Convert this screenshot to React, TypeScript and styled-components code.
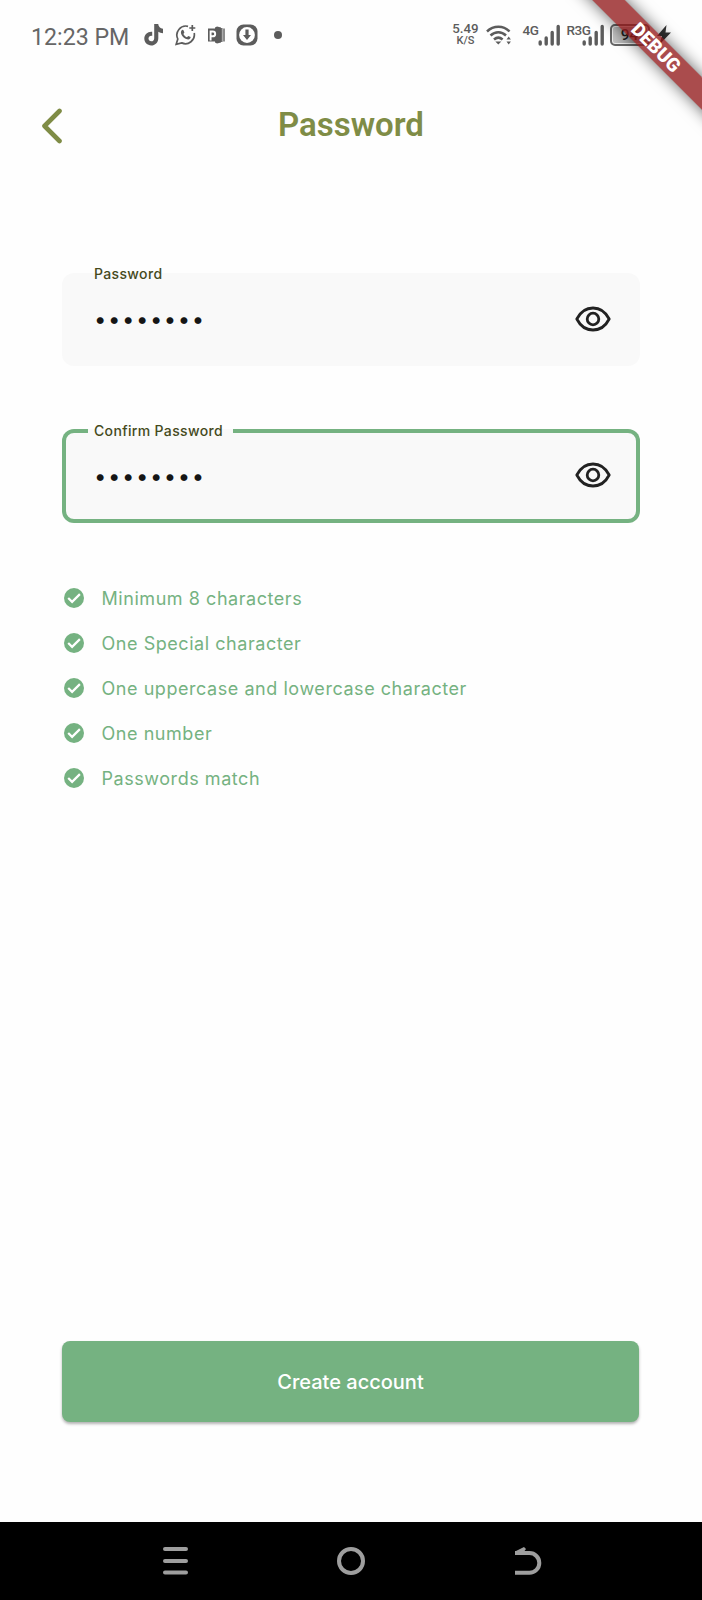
import React from 'react';
import styled, { createGlobalStyle } from 'styled-components';

const GlobalStyle = createGlobalStyle`
  * { box-sizing: border-box; }
  body { margin: 0; background: #fff; }
`;

const ink = '#5c5c5c';
const green = '#75b281';

const Screen = styled.div`
  position: relative;
  display: flex;
  flex-direction: column;
  width: 702px;
  height: 1600px;
  overflow: hidden;
  background: #fefefe;
  font-family: Inter, 'Liberation Sans', sans-serif;
`;

const StatusBar = styled.header`
  display: flex;
  justify-content: space-between;
  height: 72px;
  padding: 0 31.5px 0 31px;
  color: ${ink};
  font-family: Roboto, 'Liberation Sans', sans-serif;
`;

const StatusGroup = styled.div`
  display: flex;
  align-items: center;
  height: 70px;
`;

const Clock = styled.span`
  width: 111px;
  color: #666;
  font-size: 23.2px;
  font-weight: 400;
  line-height: 28px;
  white-space: nowrap;
  padding-top: 3px;
`;

const Speed = styled.div`
  display: flex;
  flex-direction: column;
  align-items: center;
  width: 26px;
  font-size: 13.3px;
  font-weight: 500;
  line-height: 12px;
  white-space: nowrap;
`;

const SpeedUnit = styled.span`
  font-size: 11px;
`;

const Signal = styled.div<{ $width: number; $gap: number }>`
  display: flex;
  align-items: flex-end;
  width: ${(p) => p.$width}px;
  height: 22px;
  margin-left: ${(p) => p.$gap}px;
`;

const SignalName = styled.span<{ $width: number }>`
  align-self: flex-start;
  width: ${(p) => p.$width}px;
  font-size: 13.5px;
  font-weight: 500;
  line-height: 13px;
  letter-spacing: -0.5px;
  white-space: nowrap;
`;

const Battery = styled.div`
  display: flex;
  align-items: center;
  justify-content: center;
  width: 40px;
  height: 22px;
  margin-left: 6px;
  border: 2px solid #666;
  border-radius: 5px;
  background: linear-gradient(90deg, #c4c4c4, #999);
  box-shadow: inset 0 0 0 1px #eee;
  color: #222;
  font-size: 15.5px;
  font-weight: 500;
`;

const Glyph = styled.svg<{ $gap?: number }>`
  display: block;
  flex: none;
  margin-left: ${(p) => p.$gap ?? 0}px;
`;

const Ribbon = styled.div`
  position: absolute;
  top: 35.5px;
  left: 555.5px;
  width: 200px;
  height: 23px;
  transform: rotate(45deg);
  background: rgba(145, 22, 24, 0.77);
  box-shadow: 0 0 16px rgba(0, 0, 0, 0.6);
  color: #fff;
  font: 900 19px/24px Roboto, 'Liberation Sans', sans-serif;
  text-align: center;
`;

const TitleBar = styled.div`
  display: grid;
  grid-template-columns: 60px 1fr 60px;
  align-items: center;
  height: 108px;
  padding: 0 8px;
`;

const BackButton = styled.button`
  display: flex;
  width: 60px;
  padding: 0 0 0 32px;
  border: 0;
  background: none;
`;

const Title = styled.h1`
  margin: -2px 0 0;
  color: #7f8c46;
  font: 600 33px/40px Roboto, 'Liberation Sans', sans-serif;
  text-align: center;
`;

const Form = styled.main`
  display: flex;
  flex: 1;
  flex-direction: column;
  padding: 93px 62px 100px;
`;

const Field = styled.div<{ $focused?: boolean }>`
  position: relative;
  display: flex;
  align-items: center;
  justify-content: space-between;
  height: ${(p) => (p.$focused ? 94 : 93)}px;
  margin: 0 0 ${(p) => (p.$focused ? 62 : 63)}px;
  padding: 0 29.5px 2px 32px;
  border-radius: 12px;
  background: #f9f9f9;
  box-shadow: ${(p) => (p.$focused ? `inset 0 0 0 4px ${green}` : 'none')};
`;

const FieldLabel = styled.label<{ $focused?: boolean }>`
  position: absolute;
  top: ${(p) => (p.$focused ? -8 : -9)}px;
  left: 26px;
  padding: 0 10px 0 6px;
  background: ${(p) => (p.$focused ? 'linear-gradient(#fefefe 8px, #f9f9f9 8px)' : 'none')};
  color: #454a1c;
  font-size: 14px;
  font-weight: 500;
  line-height: 20px;
  letter-spacing: 0.35px;
  white-space: nowrap;
`;

const Dots = styled.span`
  padding-top: 1px;
  color: #151515;
  font-size: 22px;
  line-height: 24px;
  letter-spacing: 1.6px;
`;

const Rules = styled.ul`
  display: flex;
  flex-direction: column;
  margin: -9px 0 0;
  padding: 0;
  list-style: none;
`;

const Rule = styled.li`
  display: flex;
  align-items: center;
  gap: 17.5px;
  height: 44.9px;
  padding-left: 2px;
  color: ${green};
  font-size: 18px;
  font-weight: 400;
  letter-spacing: 0.55px;
`;

const CreateButton = styled.button`
  width: 577px;
  height: 81px;
  margin: auto 0 0;
  border: 0;
  border-radius: 8px;
  background: ${green};
  box-shadow: 0 2px 3px rgba(0, 0, 0, 0.3);
  color: #fff;
  font: 500 20px/24px Inter, 'Liberation Sans', sans-serif;
`;

const NavBar = styled.nav`
  display: flex;
  align-items: center;
  justify-content: space-between;
  height: 78px;
  padding: 0 160px;
  background: #000;
`;

const Eye = () => (
  <Glyph width="36" height="26" viewBox="0 0 36 26" fill="none" stroke="#222" strokeWidth="2.8">
    <path d="M1.8 13C5.5 5.8 11.5 2 18 2s12.500 3.800 16.200 11C30.500 20.200 24.500 24 18 24S5.500 20.200 1.800 13Z" strokeLinejoin="round" />
    <circle cx="18" cy="13" r="5.800" />
  </Glyph>
);

const Bars = () => (
  <Glyph width="22" height="22" viewBox="0 0 22 22" stroke={ink} strokeWidth="3.400" strokeLinecap="round">
    <path d="M2.200 18v2M8.200 14v6M14.200 8.500V20M20.200 2.500V20" />
  </Glyph>
);

const Check = () => (
  <Glyph width="20" height="20" viewBox="0 0 20 20">
    <circle cx="10" cy="10" r="10" fill={green} />
    <path d="m4.200 10 3.900 3.900 7.800-7.800" fill="none" stroke="#fff" strokeWidth="2.200" />
  </Glyph>
);

const rules = [
  'Minimum 8 characters',
  'One Special character',
  'One uppercase and lowercase character',
  'One number',
  'Passwords match',
];

export default function App() {
  return (
    <Screen>
      <GlobalStyle />
      <StatusBar>
        <StatusGroup>
          <Clock>12:23 PM</Clock>
          <Glyph $gap={1.5} width="20" height="22" viewBox="0 0 20 22" fill={ink}>
            <path d="M10.200 0h4c.3 2.600 2 4.500 4.800 4.800v4.400c-1.800 0-3.400-.5-4.700-1.400v6.400C14.300 18.500 11 21.500 7.200 21.500S.3 18.500.3 14.600c0-4.200 3.600-7.300 7.900-6.800v4.100c-2-.5-3.700.8-3.700 2.700 0 1.600 1.200 2.700 2.800 2.700 1.800 0 2.900-1.200 2.900-3.100V0Z" />
          </Glyph>
          <Glyph $gap={11} width="22" height="22" viewBox="0 0 22 22" fill="none" stroke={ink} strokeWidth="1.700">
            <path d="M13 2.300A9 9 0 0 0 2.800 15L1.200 20.300l5.500-1.400A9 9 0 0 0 19.200 9" />
            <path d="M17.300 1v6M14.300 4h6" />
            <path d="M6.500 6.500c.8-1 1.800-.8 2.200.3l.7 1.700-1 1.500c.8 1.600 2 2.600 3.500 3.200l1.400-1.300 2.400 1.200c-.2 2.500-2.400 2.800-4.500 1.900-2.800-1.200-6.800-5.100-4.700-8.500Z" fill={ink} stroke="none" />
          </Glyph>
          <Glyph $gap={10} width="18" height="18" viewBox="0 0 18 18">
            <path d="M8 1.500 10 .500 14 1.500v15l-4 1-2-1Z" fill={ink} />
            <path d="M14.800 2v14M17 2.500v13" stroke={ink} strokeWidth="1.400" />
            <path d="M1 2.500h9v13H1Z" fill={ink} />
            <path d="M3.600 14.500V5.500h2.200a2.400 2.400 0 0 1 0 4.800H3.600" fill="none" stroke="#fff" strokeWidth="1.900" />
          </Glyph>
          <Glyph $gap={11} width="22" height="22" viewBox="0 0 22 22">
            <rect x="0.500" y="0.500" width="21" height="21" rx="7" fill={ink} />
            <circle cx="11" cy="11" r="7.900" fill="#fff" />
            <path d="M9.400 5.500h3.200V11H15l-4 5-4-5h2.400Z" fill={ink} />
          </Glyph>
          <Glyph $gap={16} width="8" height="8" viewBox="0 0 8 8">
            <circle cx="4" cy="4" r="4" fill={ink} />
          </Glyph>
        </StatusGroup>
        <StatusGroup>
          <Speed>
            5.49
            <SpeedUnit>K/S</SpeedUnit>
          </Speed>
          <Glyph $gap={7} width="26" height="20" viewBox="0 0 26 20" fill="none" stroke={ink} strokeWidth="2.500">
            <path d="M1 6.500C7.500.2 17.500.2 23.500 6.500M4.500 10.500c4.700-4.300 11-4.300 15.500 0M8 14.500c2.600-2.300 6-2.300 8.600 0" />
            <path d="m9.300 16.500 3 3 3-3Z" fill={ink} stroke="none" />
            <path d="M20.500 14.500l2.200-3 2.200 3ZM20.500 16.500l2.200 3 2.200-3Z" fill={ink} stroke="none" />
          </Glyph>
          <Signal $gap={11} $width={37}>
            <SignalName $width={15}>4G</SignalName>
            <Bars />
          </Signal>
          <Signal $gap={7} $width={37}>
            <SignalName $width={15}>R3G</SignalName>
            <Bars />
          </Signal>
          <Battery>94</Battery>
          <Glyph $gap={7} width="14" height="20" viewBox="0 0 14 20" fill="#333">
            <path d="M9.500 0 0 11h5L2 20 14 7.500H8.500Z" />
          </Glyph>
        </StatusGroup>
      </StatusBar>
      <TitleBar>
        <BackButton aria-label="Back">
          <Glyph width="24" height="36" viewBox="0 0 24 36" fill="none" stroke="#7f8c46" strokeWidth="4.600" strokeLinecap="round" strokeLinejoin="round">
            <path d="M19.500 3 4.500 18l15 15" />
          </Glyph>
        </BackButton>
        <Title>Password</Title>
      </TitleBar>
      <Form>
        <Field>
          <FieldLabel>Password</FieldLabel>
          <Dots>••••••••</Dots>
          <Eye />
        </Field>
        <Field $focused>
          <FieldLabel $focused>Confirm Password</FieldLabel>
          <Dots>••••••••</Dots>
          <Eye />
        </Field>
        <Rules>
          {rules.map((rule) => (
            <Rule key={rule}>
              <Check />
              {rule}
            </Rule>
          ))}
        </Rules>
        <CreateButton>Create account</CreateButton>
      </Form>
      <NavBar>
        <Glyph width="30" height="30" viewBox="0 0 30 30" stroke="#9e9e9e" strokeWidth="4" strokeLinecap="round">
          <path d="M5 3h21M5 15h21M5 26.500h21" />
        </Glyph>
        <Glyph width="30" height="30" viewBox="0 0 30 30" fill="none" stroke="#9e9e9e" strokeWidth="4">
          <circle cx="15" cy="15" r="12" />
        </Glyph>
        <Glyph width="30" height="30" viewBox="0 0 30 30" fill="none" stroke="#9e9e9e" strokeWidth="4">
          <path d="M3 26.700h14.500a9.800 9.800 0 0 0 0-19.600H3" />
          <path d="M3 5.500 12 1l2 2-3 4H3Z" fill="#9e9e9e" stroke="none" />
        </Glyph>
      </NavBar>
      <Ribbon>DEBUG</Ribbon>
    </Screen>
  );
}
